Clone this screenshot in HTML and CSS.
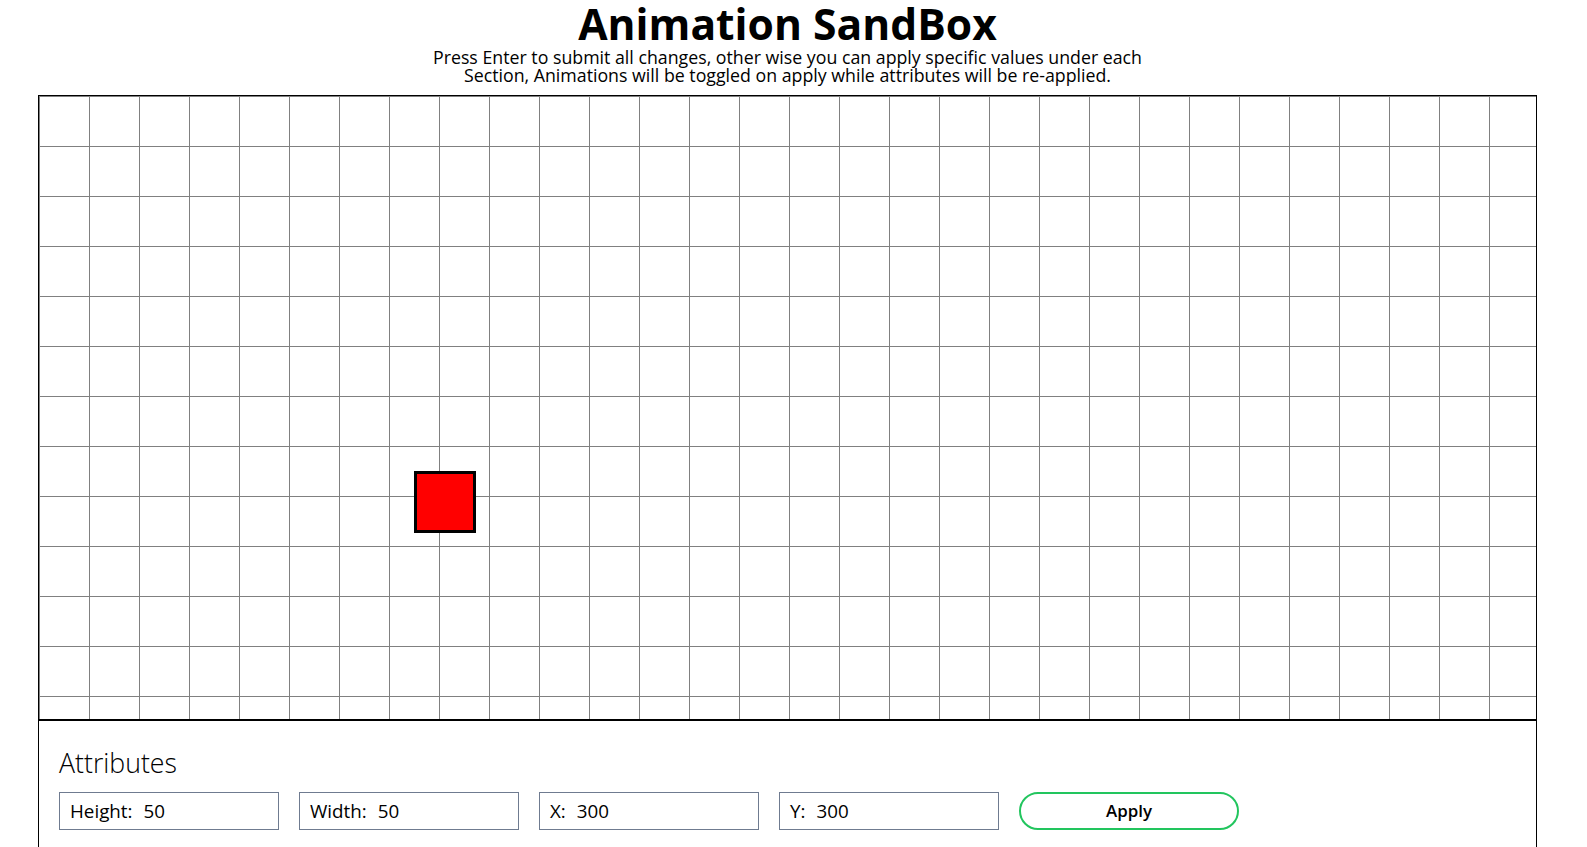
FILE: index.html
```html
<!DOCTYPE html>
<html>
<head>
<meta charset="utf-8">
<title>Animation SandBox</title>
<link rel="stylesheet" href="styles.css">
</head>
<body>
<div class="page">
  <header class="header">
    <h1 class="title">Animation SandBox</h1>
    <p class="subtitle">Press Enter to submit all changes, other wise you can apply specific values under each<br>Section, Animations will be toggled on apply while attributes will be re-applied.</p>
  </header>
  <main class="sandbox">
    <div class="canvas">
      <div class="shape" style="left:375px;top:375px;"></div>
    </div>
    <section class="attributes">
      <h2 class="section-title">Attributes</h2>
      <div class="controls">
        <label class="field"><span class="field-label">Height:</span><input class="field-input" type="text" value="50"></label>
        <label class="field"><span class="field-label">Width:</span><input class="field-input" type="text" value="50"></label>
        <label class="field"><span class="field-label">X:</span><input class="field-input" type="text" value="300"></label>
        <label class="field"><span class="field-label">Y:</span><input class="field-input" type="text" value="300"></label>
        <button class="apply" type="button">Apply</button>
      </div>
    </section>
  </main>
</div>
</body>
</html>
```
FILE: styles.css
```css
html, body {
  margin: 0;
  padding: 0;
  background: #ffffff;
  overflow: hidden;
}

body {
  font-family: "Open Sans", "Noto Sans", sans-serif;
  color: #000000;
}

.page {
  width: 1575px;
}

.header {
  text-align: center;
}

.title {
  margin: 0;
  font-size: 42.6px;
  font-weight: 700;
  line-height: 46px;
}

.subtitle {
  margin: 2px 0 10.4px;
  font-size: 17.75px;
  line-height: 18.3px;
  font-weight: 400;
}

.sandbox {
  margin: 0 38px;
  width: 1499px;
  box-sizing: border-box;
  border: 1px solid #000000;
  border-bottom: 0;
}

.canvas {
  position: relative;
  height: 623px;
  border-bottom: 2px solid #000000;
  background-color: #ffffff;
  background-image:
    linear-gradient(to right, #808080 1px, transparent 1px),
    linear-gradient(to bottom, #808080 1px, transparent 1px);
  background-size: 50px 50px;
  background-position: 0 0;
}

.shape {
  position: absolute;
  width: 62px;
  height: 62px;
  box-sizing: border-box;
  background: #ff0000;
  border: 3px solid #000000;
}

.attributes {
  padding: 25.6px 20px 17.4px;
}

.section-title {
  margin: 0 0 13px;
  font-size: 26.7px;
  font-weight: 300;
  line-height: 32px;
}

.controls {
  display: flex;
  align-items: center;
  gap: 20px;
}

.field {
  display: flex;
  align-items: center;
  gap: 11px;
  width: 220px;
  height: 38px;
  box-sizing: border-box;
  border: 1px solid #6f7b90;
  padding: 0 10px;
  font-size: 18.8px;
}

.field-input {
  flex: 1;
  min-width: 0;
  border: 0;
  padding: 0;
  margin: 0;
  outline: none;
  background: transparent;
  font: inherit;
  color: #000000;
}

.apply {
  width: 220px;
  height: 38px;
  box-sizing: border-box;
  border: 2px solid #22c55e;
  border-radius: 19px;
  background: #ffffff;
  font-family: inherit;
  font-size: 16.9px;
  font-weight: 600;
  color: #000000;
  padding: 0;
}
```
